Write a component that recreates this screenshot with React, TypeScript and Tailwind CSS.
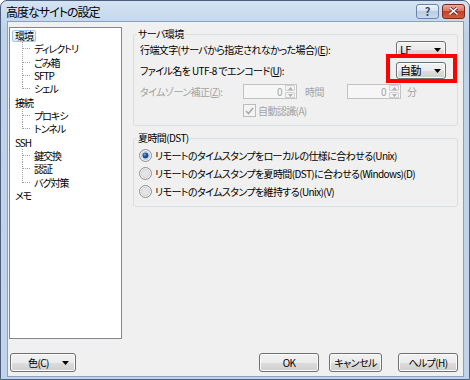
import React from 'react';

const btn =
  "flex shrink-0 items-center border border-[#707070] rounded-[3px] bg-[linear-gradient(#f2f2f2,#ebebeb_50%,#dddddd_50%,#cfcfcf)] shadow-[inset_0_0_0_1px_#fbfbfb]";

const Arrow = () => (
  <svg width="7" height="4" viewBox="0 0 7 4" className="shrink-0">
    <path d="M0 0h7L3.5 4z" fill="#000" />
  </svg>
);

const Combo = ({ value }: { value: string }) => (
  <div className={`${btn} w-[50px] h-[17px] justify-between pl-[3px] pr-[4px] text-[11px]`}>
    <span>{value}</span>
    <Arrow />
  </div>
);

const SpinInput = () => (
  <div className="flex shrink-0 items-center w-[54px] h-[15px] border border-[#bfc3c8] bg-[#f6f6f6]">
    <span className="flex-1 text-right pr-[3px] text-[#a3a3a3]">0</span>
    <div className="flex flex-col w-[10px] h-[13px] mr-[1px] gap-[1px]">
      <div className="flex-1 flex items-center justify-center border border-[#d0d0d0] rounded-[1px] bg-[#f3f3f3]">
        <svg width="5" height="3" viewBox="0 0 5 3"><path d="M0 3h5L2.5 0z" fill="#b0b0b0" /></svg>
      </div>
      <div className="flex-1 flex items-center justify-center border border-[#d0d0d0] rounded-[1px] bg-[#f3f3f3]">
        <svg width="5" height="3" viewBox="0 0 5 3"><path d="M0 0h5L2.5 3z" fill="#b0b0b0" /></svg>
      </div>
    </div>
  </div>
);

const Radio = ({ checked }: { checked?: boolean }) => (
  <svg width="13" height="13" viewBox="0 0 13 13" className="shrink-0">
    <circle cx="6.5" cy="6.5" r="6" fill="#f2f2f2" stroke="#8f8f8f" />
    <circle cx="6.5" cy="6.5" r="4.2" fill={checked ? '#dfe9f5' : '#e4e4e4'} stroke={checked ? '#b5c8df' : '#cfcfcf'} strokeWidth="0.8" />
    {checked && <circle cx="6.5" cy="6.5" r="3" fill="#1f4f8e" />}
    {checked && <circle cx="5.8" cy="5.6" r="1.2" fill="#6fa0dc" />}
  </svg>
);

type Node = { label: string; children?: string[]; selected?: boolean };

const tree: Node[] = [
  { label: '環境', selected: true, children: ['ディレクトリ', 'ごみ箱', 'SFTP', 'シェル'] },
  { label: '接続', children: ['プロキシ', 'トンネル'] },
  { label: 'SSH', children: ['鍵交換', '認証', 'バグ対策'] },
  { label: 'メモ' },
];

const Connector = ({ last }: { last: boolean }) => (
  <svg width="9" height="13.33" viewBox="0 0 9 13.33" className="shrink-0">
    <line x1="0.5" y1="0" x2="0.5" y2={last ? 7 : 13.33} stroke="#a0a0a0" strokeDasharray="1 1" />
    <line x1="1" y1="6.5" x2="8" y2="6.5" stroke="#a0a0a0" strokeDasharray="1 1" />
  </svg>
);

const TreeView = () => (
  <div className="w-[113px] h-[312px] border border-[#828790] bg-white pt-[1px] tracking-[-1px]">
    {tree.map((n) => (
      <div key={n.label}>
        <div className="flex items-center h-[13.33px] pl-[2px]">
          <span
            className={
              n.selected
                ? 'px-[2px] h-[12px] flex items-center border border-[#9dc7ee] rounded-[2px] bg-[linear-gradient(#f2f9fe,#ddeefb)]'
                : 'px-[3px]'
            }
          >
            {n.label}
          </span>
        </div>
        {n.children?.map((c, i) => (
          <div key={c} className="flex items-center h-[13.33px] pl-[12px]">
            <Connector last={i === n.children!.length - 1} />
            <span className="ml-[3px]">{c}</span>
          </div>
        ))}
      </div>
    ))}
  </div>
);

export default function App() {
  return (
    <div className="w-[470px] h-[380px] flex flex-col border border-[#4c5f7d] rounded-t-[7px] bg-[linear-gradient(#d4e3f4,#bed2ea_30px,#c0d3ea)] font-['Noto_Sans_CJK_JP',sans-serif] [font-feature-settings:'palt'] text-[10px] leading-[13px] tracking-[-0.6px] text-black overflow-hidden">
      {/* title bar */}
      <div className="h-[20px] flex items-center justify-between pl-[5px] pr-[4px]">
        <span className="text-[12px] tracking-[-1px] text-black">高度なサイトの設定</span>
        <div className="flex gap-[3px]">
          <div className="w-[23px] h-[15px] flex items-center justify-center border border-[#6f84a2] rounded-[3px] bg-[linear-gradient(#eef4fb,#d3e0f0_50%,#bccde4_50%,#c9d9ec)] text-[11px] tracking-normal font-bold leading-none text-[#33465f]">
            ?
          </div>
          <div className="w-[23px] h-[15px] flex items-center justify-center border border-[#7a2a1c] rounded-[3px] bg-[linear-gradient(#ebaa99,#d6705a_50%,#c4412a_50%,#d45c40)]">
            <svg width="9" height="8" viewBox="0 0 9 8">
              <path d="M1 1l7 6M8 1L1 7" stroke="#5a1a10" strokeWidth="3" strokeLinecap="square" />
              <path d="M1 1l7 6M8 1L1 7" stroke="#fff" strokeWidth="1.6" strokeLinecap="square" />
            </svg>
          </div>
        </div>
      </div>

      {/* client area */}
      <div className="ml-[6px] mr-[5px] mb-[2px] flex-1 flex flex-col border border-[#8ba0bc] bg-[#f0f0f0]">
        <div className="flex h-[330px] pt-[5px]">
          <div className="ml-[1px]">
            <TreeView />
          </div>

          <div className="ml-[11px] w-[325px] pt-[1px] flex flex-col">
            <fieldset className="relative border border-[#d5dfe5] rounded-[3px] pb-[8px]">
              <legend className="ml-[3px] px-[1px] leading-[12px]">サーバ環境</legend>
              <div className="flex flex-col gap-[4px] pt-[1px] pl-[6px] pr-[11px]">
                <div className="flex items-center justify-between">
                  <span>
                    行端文字(サーバから指定されなかった場合)(<span className="underline">E</span>):
                  </span>
                  <Combo value="LF" />
                </div>
                <div className="flex items-center justify-between">
                  <span>
                    ファイル名を UTF-8 でエンコード(<span className="underline">U</span>):
                  </span>
                  <Combo value="自動" />
                </div>
                <div className="flex items-center mt-[1px] text-[#a3a3a3]">
                  <span className="w-[103px]">
                    タイムゾーン補正(<span className="underline">Z</span>):
                  </span>
                  <SpinInput />
                  <span className="ml-[8px] w-[42px]">時間</span>
                  <SpinInput />
                  <span className="ml-[6px]">分</span>
                </div>
                <div className="flex items-center mt-[1px] pl-[103px] text-[#a3a3a3]">
                  <div className="w-[13px] h-[13px] border border-[#bcbcbc] bg-[#f4f4f4] flex items-center justify-center">
                    <svg width="9" height="8" viewBox="0 0 9 8">
                      <path d="M1 4l2.5 2.5L8 1" stroke="#a8a8a8" strokeWidth="1.6" fill="none" />
                    </svg>
                  </div>
                  <span className="ml-[2px]">自動認識(A)</span>
                </div>
              </div>
              {/* highlight annotation */}
              <div className="absolute left-[252px] top-[14px] w-[71px] h-[29px] border-[4px] border-[#ff0000]" />
            </fieldset>

            <fieldset className="mt-[6px] border border-[#d5dfe5] rounded-[3px] pb-[6px]">
              <legend className="ml-[3px] px-[1px] leading-[12px]">夏時間(DST)</legend>
              <div className="flex flex-col pt-[2px] pl-[5px]">
                <div className="flex items-center h-[18px] gap-[3px]">
                  <Radio checked />
                  <span>リモートのタイムスタンプをローカルの仕様に合わせる(Unix)</span>
                </div>
                <div className="flex items-center h-[18px] gap-[3px]">
                  <Radio />
                  <span>リモートのタイムスタンプを夏時間(DST)に合わせる(Windows)(D)</span>
                </div>
                <div className="flex items-center h-[18px] gap-[3px]">
                  <Radio />
                  <span>リモートのタイムスタンプを維持する(Unix)(V)</span>
                </div>
              </div>
            </fieldset>
          </div>
        </div>

        {/* bottom buttons */}
        <div className="flex items-center mt-[1px] pl-[2px]">
          <div className={`${btn} w-[66px] h-[19px] justify-between pl-[17px] pr-[6px]`}>
            <span>色(C)</span>
            <Arrow />
          </div>
          <div className="flex-1" />
          <div className={`${btn} justify-center w-[60px] h-[19px] border-[#3c7fb1] shadow-[inset_0_0_0_1px_#bde3f7]`}>OK</div>
          <div className={`${btn} justify-center ml-[10px] w-[53px] h-[19px]`}>キャンセル</div>
          <div className={`${btn} justify-center ml-[16px] w-[60px] h-[19px] mr-[5px]`}>ヘルプ(H)</div>
        </div>
      </div>
    </div>
  );
}
